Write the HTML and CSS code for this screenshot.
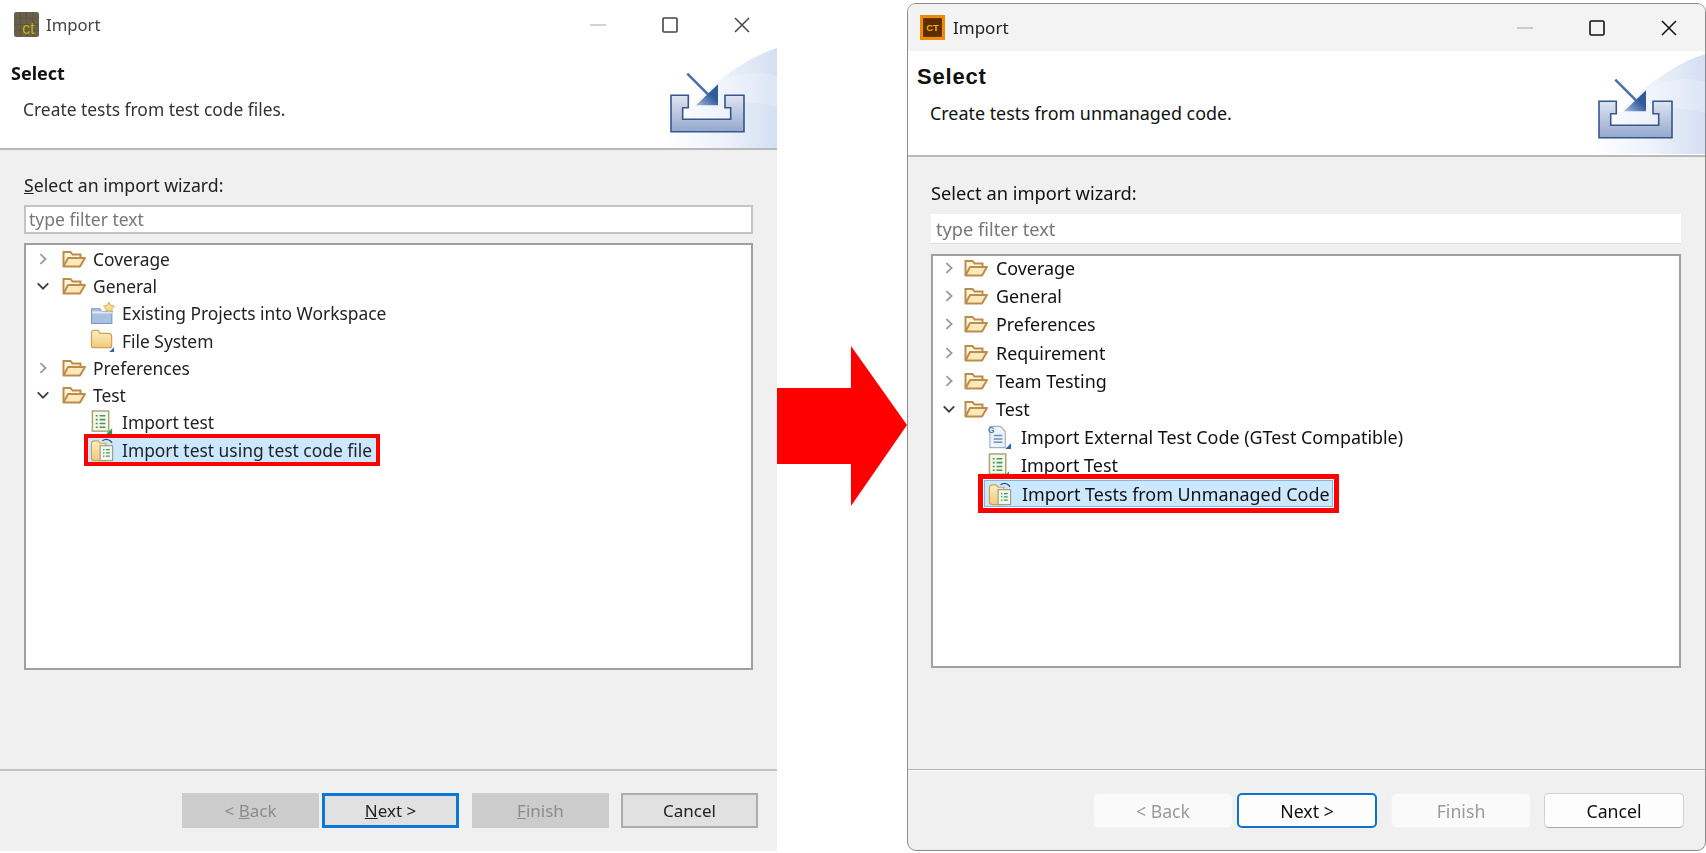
FILE: index.html
```html
<!DOCTYPE html>
<html lang="en">
<head>
  <meta charset="UTF-8">
  <title>Import wizard comparison</title>
  <link rel="stylesheet" href="styles.css">
</head>
<body>

<svg class="defs" width="0" height="0">
  <defs>
    <linearGradient id="bannerFill" x1="0" y1="0" x2="1" y2="0">
      <stop offset="0" stop-color="#ffffff"/>
      <stop offset="0.55" stop-color="#edf2fa"/>
      <stop offset="1" stop-color="#d3dff3"/>
    </linearGradient>
    <linearGradient id="trayFill" x1="0" y1="0" x2="0" y2="1">
      <stop offset="0" stop-color="#dfe5f1"/>
      <stop offset="1" stop-color="#94a8cd"/>
    </linearGradient>
    <linearGradient id="arrowFill" x1="0" y1="1" x2="1" y2="0">
      <stop offset="0" stop-color="#a9bbdb"/>
      <stop offset="0.6" stop-color="#2f5a9b"/>
    </linearGradient>
    <linearGradient id="folderFill" x1="0" y1="0" x2="0" y2="1">
      <stop offset="0" stop-color="#fdeec3"/>
      <stop offset="1" stop-color="#f5c878"/>
    </linearGradient>
    <symbol id="ic-open" viewBox="0 0 24 20">
      <path d="M1.500 17V3h7l2 2.500h8V9" fill="#fff6dc" stroke="#bd8c4c" stroke-width="2"/>
      <path d="M1.500 17.500L6 9h17l-5 8.500z" fill="#fce8ba" stroke="#bd8c4c" stroke-width="2" stroke-linejoin="round"/>
    </symbol>
    <symbol id="ic-project" viewBox="0 0 24 24">
      <path d="M1.500 7.500h8l1.500 2.500h10v11.500H1.500z" fill="#a9c0e2" stroke="#7b96c0" stroke-width="1"/>
      <path d="M2 11h19" stroke="#dfe8f5" stroke-width="2"/>
      <path d="M18 1l2 3 3.500 1-2.500 2.500.5 3-3.500-1.500-3 1.500.5-3-2.500-2.500 3.500-1z" fill="#f6dc8c" stroke="#c9a34f" stroke-width=".8"/>
    </symbol>
    <symbol id="ic-folder" viewBox="0 0 26 26">
      <path d="M1.500 5.500q0-3 3-3h4l2 3h9q3 0 3 3v10q0 2-2 2h-17q-2 0-2-2z" fill="url(#folderFill)" stroke="#d0a158" stroke-width="1.300"/>
      <path d="M25 20v5h-5z" fill="#2b66ab"/>
    </symbol>
    <symbol id="ic-test" viewBox="0 0 24 26">
      <rect x="1.500" y="1" width="17" height="21" fill="#f8f6e6" stroke="#a8a27a" stroke-width="1.500"/>
      <path d="M5 6h2m2 0h6M5 10h2m2 0h6M5 14h2m2 0h6M5 18h2m2 0h6" stroke="#3f9a63" stroke-width="1.600"/>
      <path d="M22 19v6h-6z" fill="#2f9a4b"/>
    </symbol>
    <symbol id="ic-unmanaged" viewBox="0 0 26 26">
      <path d="M1.500 7q0-3 3-3h4l2 2.500h6v18h-12q-3 0-3-2.500z" fill="url(#folderFill)" stroke="#d0a158" stroke-width="1.200"/>
      <rect x="10.500" y="9" width="13" height="15.500" fill="#f2f5e8" stroke="#9aa088" stroke-width="1.200"/>
      <path d="M13.500 13h1.500m1.500 0h4M13.500 16.500h1.500m1.500 0h4M13.500 20h1.500m1.500 0h4" stroke="#3f9a63" stroke-width="1.300"/>
      <path d="M13 4q4-3 8 0l2 2" fill="none" stroke="#2b4f80" stroke-width="1.300"/>
    </symbol>
    <symbol id="ic-external" viewBox="0 0 26 26">
      <path d="M3 1.500h11l5 5v17h-16z" fill="#eef3fa" stroke="#9fb0c6" stroke-width="1.200"/>
      <path d="M7 11h9M7 14.500h9M7 18h9" stroke="#6a8fc4" stroke-width="1.500"/>
      <text class="ic-g" x="1" y="8">G</text>
      <path d="M25 19v6h-6z" fill="#2b66ab"/>
    </symbol>
    <symbol id="ic-right" viewBox="0 0 12 16">
      <path d="M3 2.500L9 8l-6 5.500" fill="none" stroke="#9a9a9a" stroke-width="2"/>
    </symbol>
    <symbol id="ic-down" viewBox="0 0 16 12">
      <path d="M2 3l6 6 6-6" fill="none" stroke="#404040" stroke-width="2.200"/>
    </symbol>
    <symbol id="ic-banner" viewBox="0 0 115 100">
      <path d="M0 100C22 58 70 14 115 0v100z" fill="url(#bannerFill)"/>
      <path d="M60 33Q90 20 115 28v31Q80 50 40 55z" fill="#ffffff" opacity=".22"/>
      <path d="M9 47.300H26.300V59.700H20.700V71.300H68.700V59.700H63V47.300H82V83.700H9z" fill="url(#trayFill)" stroke="#34578f" stroke-width="1.600"/>
      <path d="M25.300 25.700L47 47.300" stroke="#4a70a8" stroke-width="2.600"/>
      <path d="M56 36.300V57.300H34z" fill="url(#arrowFill)"/>
    </symbol>
  </defs>
</svg>

<div class="screen">

  <!-- Old wizard -->
  <div class="win win-old">
    <div class="titlebar">
      <svg class="app-icon" viewBox="0 0 24 24">
        <rect width="24" height="24" rx="2" fill="#6b614a"/>
        <path d="M6 0v24M12 0v24M18 0v24M0 6h24M0 12h24M0 18h24" stroke="#5a5240" stroke-width=".7"/>
        <text class="app-ct app-ct-old" x="8" y="21">ct</text>
      </svg>
      <span class="title">Import</span>
      <div class="win-btns">
        <svg viewBox="0 0 16 16"><path d="M0 8h16" stroke="#c4c4c4" stroke-width="1.500"/></svg>
        <svg viewBox="0 0 16 16"><rect x="1" y="1" width="14" height="14" rx="1" fill="none" stroke="#444" stroke-width="1.600"/></svg>
        <svg viewBox="0 0 16 16"><path d="M1 1l14 14M15 1L1 15" stroke="#444" stroke-width="1.500"/></svg>
      </div>
    </div>
    <div class="banner">
      <div class="banner-text">
        <h2>Select</h2>
        <p>Create tests from test code files.</p>
      </div>
      <svg class="banner-art"><use href="#ic-banner"/></svg>
    </div>
    <div class="content">
      <label class="wiz-label"><u>S</u>elect an import wizard:</label>
      <input class="filter" type="text" placeholder="type filter text">
      <div class="tree">
        <div class="row"><svg class="twist"><use href="#ic-right"/></svg><svg class="ic"><use href="#ic-open"/></svg>Coverage</div>
        <div class="row"><svg class="twist"><use href="#ic-down"/></svg><svg class="ic"><use href="#ic-open"/></svg>General</div>
        <div class="row child"><svg class="ic"><use href="#ic-project"/></svg>Existing Projects into Workspace</div>
        <div class="row child"><svg class="ic"><use href="#ic-folder"/></svg>File System</div>
        <div class="row"><svg class="twist"><use href="#ic-right"/></svg><svg class="ic"><use href="#ic-open"/></svg>Preferences</div>
        <div class="row"><svg class="twist"><use href="#ic-down"/></svg><svg class="ic"><use href="#ic-open"/></svg>Test</div>
        <div class="row child"><svg class="ic"><use href="#ic-test"/></svg>Import test</div>
        <div class="row child"><span class="selected"><svg class="ic"><use href="#ic-unmanaged"/></svg>Import test using test code file</span></div>
      </div>
    </div>
    <div class="footer">
      <button class="btn" disabled>&lt; <u>B</u>ack</button>
      <button class="btn btn-default"><u>N</u>ext &gt;</button>
      <button class="btn btn-far" disabled><u>F</u>inish</button>
      <button class="btn btn-far btn-cancel">Cancel</button>
    </div>
  </div>

  <div class="arrow">
    <svg viewBox="0 0 130 160" width="130" height="160">
      <path d="M0 42H74V0L130 79 74 160V118H0z" fill="#ff0000"/>
    </svg>
  </div>

  <!-- New wizard -->
  <div class="win win-new">
    <div class="titlebar">
      <svg class="app-icon" viewBox="0 0 24 24">
        <rect width="24" height="24" fill="#f08a00"/>
        <rect x="3" y="3" width="18" height="18" fill="#5a2c00"/>
        <text class="app-ct" x="6" y="15">CT</text>
      </svg>
      <span class="title">Import</span>
      <div class="win-btns">
        <svg viewBox="0 0 16 16"><path d="M0 8h16" stroke="#bdbdbd" stroke-width="1.500"/></svg>
        <svg viewBox="0 0 16 16"><rect x="1" y="1" width="14" height="14" rx="1.500" fill="none" stroke="#111" stroke-width="1.600"/></svg>
        <svg viewBox="0 0 16 16"><path d="M1 1l14 14M15 1L1 15" stroke="#111" stroke-width="1.500"/></svg>
      </div>
    </div>
    <div class="banner">
      <div class="banner-text">
        <h2>Select</h2>
        <p>Create tests from unmanaged code.</p>
      </div>
      <svg class="banner-art"><use href="#ic-banner"/></svg>
    </div>
    <div class="content">
      <label class="wiz-label">Select an import wizard:</label>
      <input class="filter" type="text" placeholder="type filter text">
      <div class="tree">
        <div class="row"><svg class="twist"><use href="#ic-right"/></svg><svg class="ic"><use href="#ic-open"/></svg>Coverage</div>
        <div class="row"><svg class="twist"><use href="#ic-right"/></svg><svg class="ic"><use href="#ic-open"/></svg>General</div>
        <div class="row"><svg class="twist"><use href="#ic-right"/></svg><svg class="ic"><use href="#ic-open"/></svg>Preferences</div>
        <div class="row"><svg class="twist"><use href="#ic-right"/></svg><svg class="ic"><use href="#ic-open"/></svg>Requirement</div>
        <div class="row"><svg class="twist"><use href="#ic-right"/></svg><svg class="ic"><use href="#ic-open"/></svg>Team Testing</div>
        <div class="row"><svg class="twist"><use href="#ic-down"/></svg><svg class="ic"><use href="#ic-open"/></svg>Test</div>
        <div class="row child"><svg class="ic"><use href="#ic-external"/></svg>Import External Test Code (GTest Compatible)</div>
        <div class="row child"><svg class="ic"><use href="#ic-test"/></svg>Import Test</div>
        <div class="row child"><span class="selected"><svg class="ic"><use href="#ic-unmanaged"/></svg>Import Tests from Unmanaged Code</span></div>
      </div>
    </div>
    <div class="footer">
      <button class="btn" disabled>&lt; Back</button>
      <button class="btn btn-default">Next &gt;</button>
      <button class="btn btn-far" disabled>Finish</button>
      <button class="btn btn-far btn-cancel">Cancel</button>
    </div>
  </div>

</div>

</body>
</html>
```

FILE: styles.css
```css
body {
  margin: 0;
  background: #fff;
  font-family: "Noto Sans", "Open Sans", sans-serif;
  font-size: 17.400px;
  color: #222;
  overflow: hidden;
}
.defs {
  display: block;
  height: 0;
}
.screen {
  display: flex;
  align-items: flex-start;
  height: 853px;
}

/* window shell */
.win {
  display: flex;
  flex-direction: column;
  box-sizing: border-box;
  background: #f0f0f0;
}
.win-old {
  width: 777px;
  height: 850px;
  margin-top: 1px;
  filter: blur(0.4px);
}
.win-new {
  width: 799px;
  height: 848px;
  margin-top: 3px;
  border: 1px solid #8c8c8c;
  border-radius: 9px;
  overflow: hidden;
  font-size: 17.900px;
  color: #111;
  filter: blur(0.25px);
}
.arrow {
  width: 130px;
  height: 160px;
  margin-top: 346px;
}
.arrow svg {
  display: block;
}

/* title bar */
.titlebar {
  display: flex;
  align-items: center;
  flex-shrink: 0;
  height: 47px;
  box-sizing: border-box;
}
.win-old .titlebar {
  padding-left: 14px;
  background: #fff;
}
.win-new .titlebar {
  padding-left: 12px;
  background: #f3f3f3;
}
.app-icon {
  width: 25px;
  height: 25px;
  flex-shrink: 0;
}
.app-ct {
  font-family: "Liberation Sans", sans-serif;
  font-size: 9px;
  font-weight: bold;
  fill: #f5b000;
}
.app-ct-old {
  font-size: 15px;
  font-weight: normal;
  fill: #d2b400;
}
.ic-g {
  font-family: "Liberation Sans", sans-serif;
  font-size: 9px;
  font-weight: bold;
  fill: #4a78b5;
}
.title {
  margin-left: 7px;
  font-size: 16.700px;
  color: #444;
}
.win-new .title {
  margin-left: 8px;
  font-size: 17px;
  color: #222;
}
.win-btns {
  display: flex;
  gap: 56px;
  margin-left: auto;
  padding-right: 27px;
}
.win-new .win-btns {
  padding-right: 28px;
}
.win-btns svg {
  display: block;
  width: 16px;
  height: 16px;
}

/* white header */
.banner {
  display: flex;
  justify-content: space-between;
  flex-shrink: 0;
  height: 102px;
  box-sizing: border-box;
  background: #fff;
  border-bottom: 2px solid #b9b9b9;
}
.win-new .banner {
  height: 106px;
}
.banner-text {
  padding-left: 11px;
}
.win-new .banner-text {
  padding-left: 9px;
}
.banner-text h2 {
  margin: 12px 0 0;
  font-size: 18px;
  line-height: 26px;
  color: #111;
}
.win-new .banner-text h2 {
  margin-top: 13px;
  font-family: "Liberation Sans", sans-serif;
  font-size: 22px;
  letter-spacing: 0.8px;
}
.banner-text p {
  margin: 11px 0 0 12px;
  line-height: 24px;
  color: #333;
}
.win-new .banner-text p {
  margin: 11px 0 0 13px;
  color: #111;
}
.banner-art {
  width: 115px;
  height: 100px;
  flex-shrink: 0;
}
.win-new .banner-art {
  margin-top: 3px;
}

/* middle part */
.content {
  flex: 1;
  display: flex;
  flex-direction: column;
  padding: 24px 24px 0;
}
.win-new .content {
  padding: 25px 24px 0 23px;
}
.wiz-label {
  font-size: 17.700px;
  line-height: 22px;
}
.win-new .wiz-label {
  font-size: 18.250px;
}
.filter {
  height: 29px;
  margin-top: 9px;
  padding: 0 3px 2px;
  box-sizing: border-box;
  border: 2px solid #c4c4c4;
  background: #fff;
  font-family: inherit;
  font-size: 17.500px;
}
.filter::placeholder {
  color: #777;
  opacity: 1;
}
.win-new .filter {
  height: 30px;
  margin-top: 10px;
  padding: 0 5px;
  border: 0;
  border-bottom: 1px solid #ddd;
  font-size: 18.200px;
}
.tree {
  height: 427px;
  margin-top: 9px;
  box-sizing: border-box;
  border: 2px solid #a0a0a0;
  background: #fff;
}
.win-new .tree {
  height: 414px;
  margin-top: 10px;
}
.row {
  display: flex;
  align-items: center;
  height: 27.300px;
  white-space: nowrap;
}
.win-new .row {
  height: 28.200px;
}
.win-new .row:first-child {
  margin-top: -2px;
}
.twist {
  width: 14px;
  height: 14px;
  margin-left: 10px;
  flex-shrink: 0;
}
.win-new .twist {
  margin-left: 9px;
}
.row .ic {
  width: 24px;
  height: 22px;
  margin: 0 7px 0 12px;
  flex-shrink: 0;
}
.win-new .row .ic {
  margin: 0 8px 0 8px;
}
.row.child {
  padding-left: 62px;
}
.win-new .row.child {
  padding-left: 51px;
}
.row.child .ic {
  width: 25px;
  height: 25px;
  margin: 0 7px 0 2px;
}
.win-new .row.child .ic {
  margin: 0 9px 0 3px;
}
.selected {
  display: inline-flex;
  align-items: center;
  height: 24px;
  padding-right: 4px;
  background: #cce8ff;
  outline: 4px solid #ff0000;
}
.win-new .selected {
  height: 27px;
  padding-right: 2px;
  box-sizing: border-box;
  border: 1px solid #7db8e8;
  outline-width: 5px;
  outline-offset: 1px;
}

/* buttons */
.footer {
  display: flex;
  flex-shrink: 0;
  gap: 3px;
  height: 82px;
  box-sizing: border-box;
  padding: 22px 19px 0 0;
  justify-content: flex-end;
  border-top: 2px solid #c2c2c2;
}
.win-new .footer {
  height: 81px;
  gap: 4px;
  padding: 23px 21px 0 0;
  border-top: 1px solid #b5b5b5;
  box-shadow: inset 0 1px 0 #fff;
}
.btn {
  width: 137px;
  height: 35px;
  padding: 0;
  box-sizing: border-box;
  border: 2px solid #adadad;
  background: #e1e1e1;
  font-family: inherit;
  font-size: 17px;
  color: #222;
}
.btn:disabled {
  border-color: #cccccc;
  background: #cccccc;
  color: #8c8c8c;
}
.btn-default {
  border: 3px solid #0a78d7;
}
.btn-far {
  margin-left: 10px;
}
.btn-cancel {
  margin-left: 9px;
}
.win-new .btn {
  width: 140px;
  border: 1px solid #d0d0d0;
  border-bottom-color: #a8a8a8;
  border-radius: 5px;
  background: #fdfdfd;
  font-size: 17.700px;
  color: #111;
}
.win-new .btn:disabled {
  border-color: #f2f2f2;
  background: #fafafa;
  color: #9a9a9a;
}
.win-new .btn-default {
  border: 2px solid #0f74c8;
}
```
